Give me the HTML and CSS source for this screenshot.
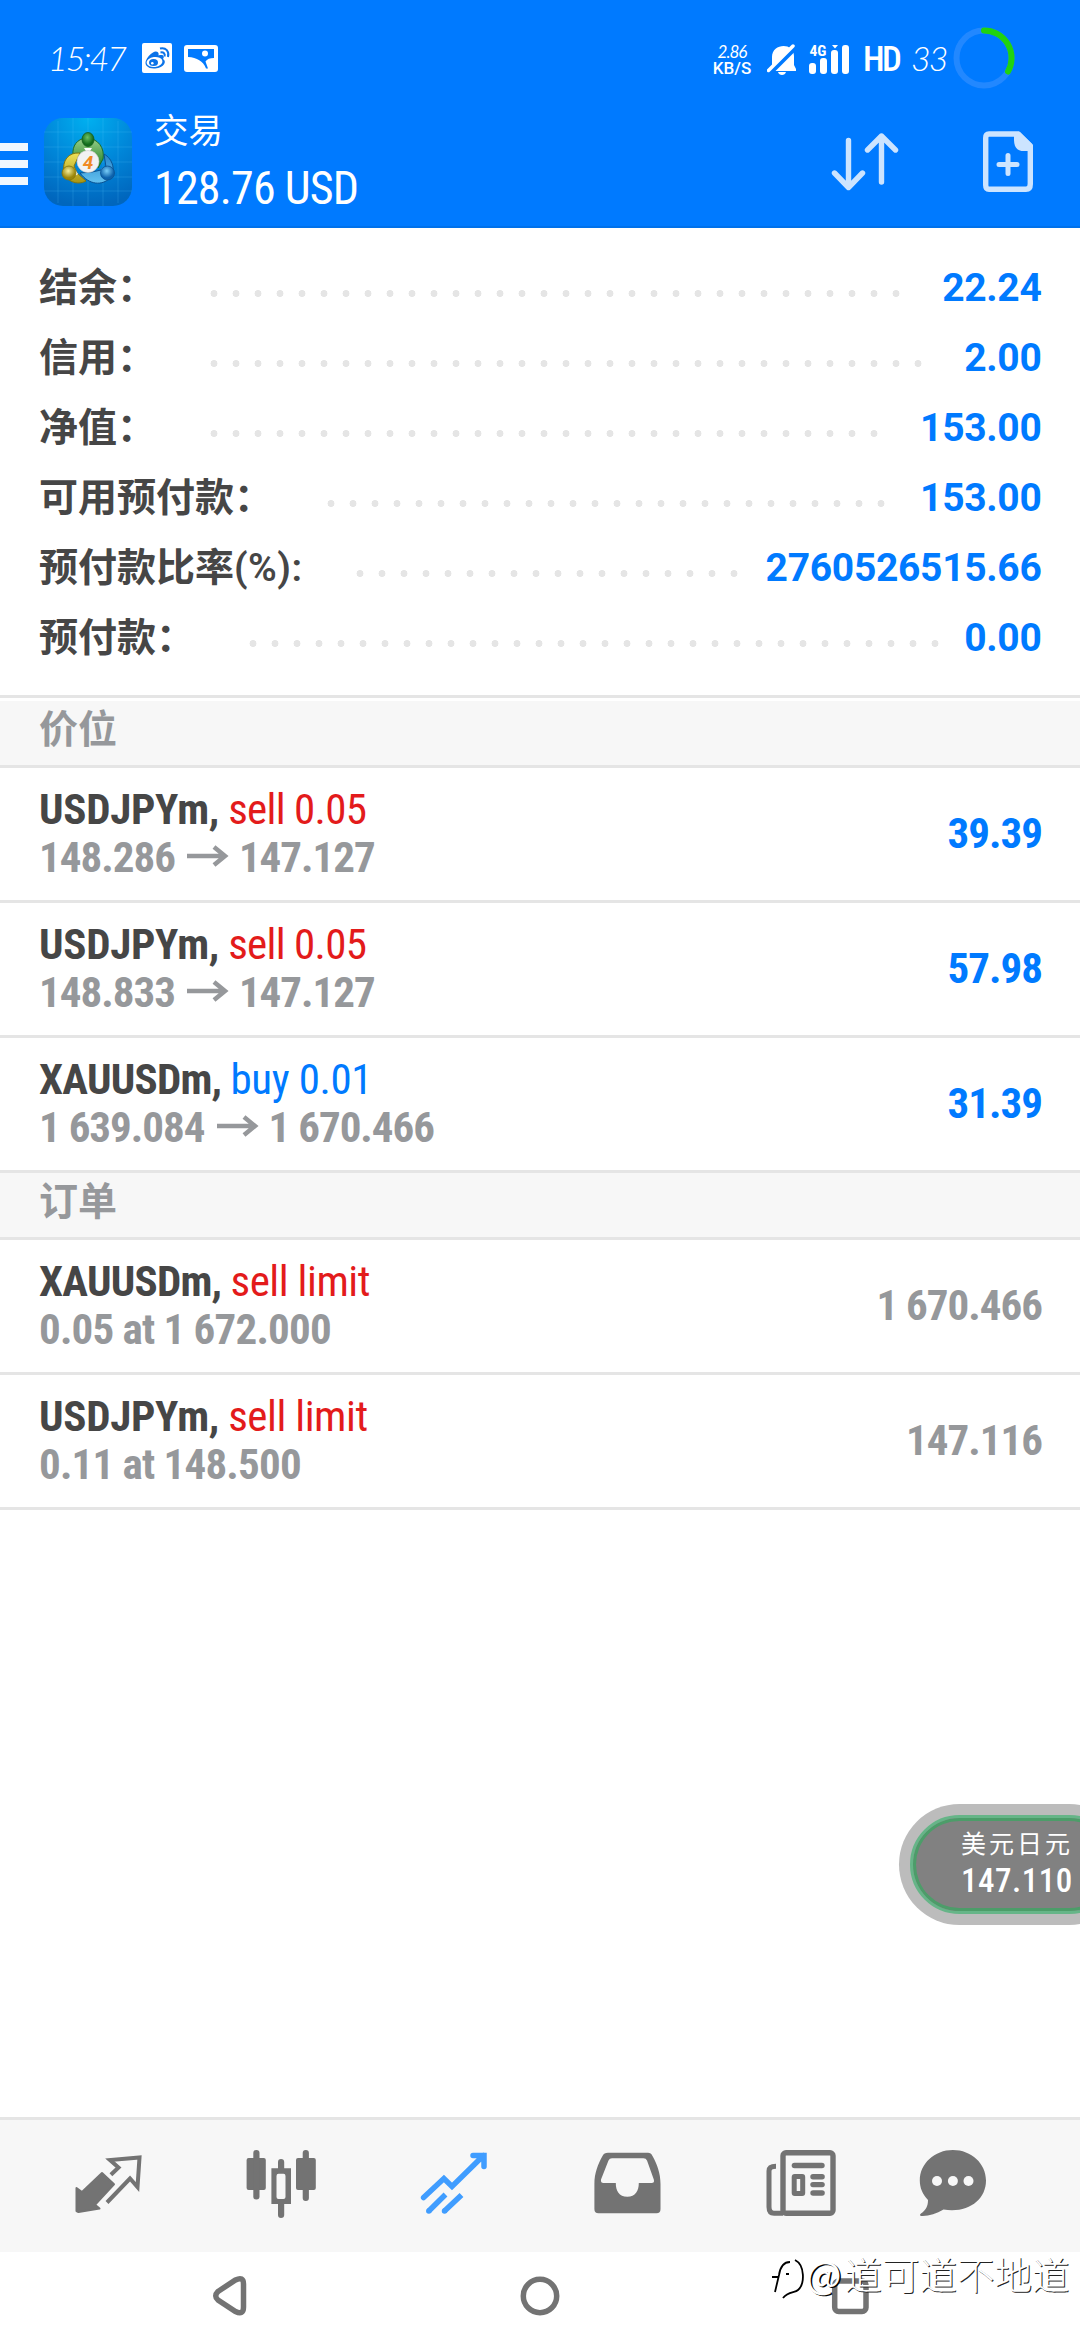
FILE: index.html
```html
<!DOCTYPE html>
<html lang="zh-CN">
<head>
<meta charset="utf-8">
<title>交易</title>
<link rel="stylesheet" href="styles.css">
</head>
<body>
<header class="header">
  <div class="status">
    <span class="clock">15:47</span>
    <svg class="st-weibo" width="30" height="30" viewBox="0 0 30 30">
      <rect width="30" height="30" rx="2" fill="#fff"/>
      <path d="M11 9.500C14 7.500 17.500 9 16.500 12.500C21 11 23 13 21 16C25 18 22.500 25 13 25.500C6 26 2 22 4 17.500C5 14.500 8 11 11 9.500Z" fill="#0b73e8"/>
      <ellipse cx="12.500" cy="19" rx="8" ry="5" fill="#fff" transform="rotate(-8 12.500 19)"/>
      <ellipse cx="11.500" cy="19.500" rx="4.500" ry="3.600" fill="#0b73e8"/>
      <circle cx="10.300" cy="20.300" r="1.300" fill="#fff"/>
      <path d="M18 5.500C24 4 27.500 8.500 26 14M18.500 9.500C21.500 8.800 23.500 10.800 22.500 13.500" fill="none" stroke="#0b73e8" stroke-width="2"/>
    </svg>
    <svg class="st-photo" width="34" height="27" viewBox="0 0 34 27">
      <rect width="34" height="27" rx="3" fill="#fff"/>
      <path d="M4 4H30V13C26 13 23 14 21.500 16.500L24 23.500H22C19 16 13 12.500 4 12Z" fill="#007aff"/>
      <circle cx="21" cy="8.500" r="3" fill="#fff"/>
    </svg>
    <span class="spacer"></span>
    <span class="speed"><span class="speed-num">2.86</span><span class="speed-unit">KB/S</span></span>
    <svg class="st-bell" width="30" height="32" viewBox="766 44 30 32">
      <path d="M771 69V57C771 43 793 42 793 56V65L795 69V71H768Z" fill="#fff"/>
      <path d="M777 72H785C784 76 778 76 777 72Z" fill="#fff"/>
      <path d="M768 74L795 47" stroke="#007aff" stroke-width="5"/>
      <path d="M767.500 70.500L792 46" stroke="#fff" stroke-width="3.500" stroke-linecap="round"/>
    </svg>
    <svg class="st-signal" width="40" height="36" viewBox="808 40 40 36">
      <text x="808.500" y="56" class="net-label" textLength="17" lengthAdjust="spacingAndGlyphs">4G</text>
      <g fill="#fff"><rect x="808" y="63" width="7" height="11" rx="3"/><rect x="819" y="58" width="7" height="16" rx="3"/><rect x="830" y="50" width="7" height="24" rx="3"/><rect x="841" y="45" width="7" height="29" rx="3"/><path d="M831 45H837L834 48.500Z"/></g>
    </svg>
    <span class="hd">HD</span>
    <span class="battery">33</span>
    <svg width="62" height="62" viewBox="0 0 62 62" fill="none" stroke-width="6">
      <circle cx="31" cy="31" r="27.500" stroke="#2288ff"/>
      <path d="M31 3.500A27.500 27.500 0 0 1 55 44.500" stroke="#20d30f" stroke-linecap="round"/>
    </svg>
  </div>
  <div class="appbar">
    <div class="menu"><i></i><i></i><i></i></div>
    <svg class="logo" width="88" height="88" viewBox="0 0 88 88">
      <defs>
        <radialGradient id="bg" cx=".5" cy="0" r="1"><stop offset="0" stop-color="#00b0f0"/><stop offset=".55" stop-color="#0085d8"/><stop offset="1" stop-color="#0066bd"/></radialGradient>
        <linearGradient id="gr" x1="0" y1="0" x2="0" y2="1"><stop offset="0" stop-color="#9ad08a"/><stop offset="1" stop-color="#1d7f25"/></linearGradient>
        <linearGradient id="ye" x1="0" y1="0" x2="0" y2="1"><stop offset="0" stop-color="#eee25a"/><stop offset="1" stop-color="#a89412"/></linearGradient>
        <linearGradient id="bl" x1="0" y1="0" x2="0" y2="1"><stop offset="0" stop-color="#2584cc"/><stop offset="1" stop-color="#64c2f0"/></linearGradient>
        <radialGradient id="gb" cx=".45" cy=".35"><stop offset="0" stop-color="#6cc065"/><stop offset="1" stop-color="#136c1d"/></radialGradient>
        <radialGradient id="yb" cx=".45" cy=".35"><stop offset="0" stop-color="#f5ef9b"/><stop offset="1" stop-color="#9b860a"/></radialGradient>
        <radialGradient id="bb" cx=".45" cy=".35"><stop offset="0" stop-color="#79cdf8"/><stop offset="1" stop-color="#0d62ac"/></radialGradient>
      </defs>
      <rect width="88" height="88" rx="19" fill="url(#bg)"/>
      <path d="M14 3V85M29 0V88M44 0V88M59 0V88M74 3V85M0 14H88M0 29H88M0 44H88M0 59H88M0 73H88" stroke="#5fc8ff" stroke-opacity=".2" fill="none"/>
      <path d="M29 37C28 28 33 21 42 20C54 20 61 30 59 41L54 50L50 36L44 32L36 37Z" fill="url(#gr)" stroke="#1c6d26"/>
      <path d="M60 36C69 41 72 53 66 60C58 68 45 67 36 55L48 54L57 52L62 49Z" fill="url(#bl)" stroke="#0b5292"/>
      <path d="M36 35C24 34 18 43 20 54C22 63 33 68 42 63L33 55L30 48Z" fill="url(#ye)" stroke="#85760c"/>
      <path d="M40 30H48L46 33H42ZM30 50L34 56L31 58ZM57 51L62 50L60 57Z" fill="#fff"/>
      <ellipse cx="44" cy="21.500" rx="6" ry="7" fill="url(#gb)" stroke="#165d1d" stroke-width=".8"/>
      <circle cx="25" cy="55" r="7" fill="url(#yb)" stroke="#83730c" stroke-width=".8"/>
      <circle cx="63.500" cy="55" r="7" fill="url(#bb)" stroke="#0b5292" stroke-width=".8"/>
      <circle cx="44" cy="43.500" r="11" fill="#f2f2f2" stroke="#c7c7c7" stroke-width=".6"/>
      <text x="44" y="50.500" class="logo-num" text-anchor="middle">4</text>
    </svg>
    <div class="titles">
      <div class="title">交易</div>
      <div class="balance">128.76 USD</div>
    </div>
    <span class="spacer"></span>
    <svg class="sort" width="68" height="60" viewBox="831 131 68 60" fill="none" stroke="#cce4ff" stroke-width="5.400" stroke-linecap="round" stroke-linejoin="round">
      <path d="M848.500 140.500V187M834.500 173L848.500 187.500L862.500 173M881.500 182V136M867.500 150L881.500 136L895.500 150"/>
    </svg>
    <svg class="newdoc" width="50" height="61" viewBox="983 131 50 61">
      <path d="M989 134H1018L1030.300 146V184Q1030.300 189.300 1026 189.300H989Q985.700 189.300 985.700 185V138Q985.700 134 989 134Z" fill="none" stroke="#cce4ff" stroke-width="5.400"/>
      <path d="M1014 132H1020L1032 144V151H1024Q1014 151 1014 140Z" fill="#cce4ff"/>
      <path d="M999 164.500H1017M1008 155.500V173.500" stroke="#cce4ff" stroke-width="5" stroke-linecap="round"/>
    </svg>
  </div>
</header>

<main>
  <section class="account">
    <div class="acc-row"><span class="label">结余：</span><i class="dots" style="--n:32"></i><span class="amount">22.24</span></div>
    <div class="acc-row"><span class="label">信用：</span><i class="dots" style="--n:33"></i><span class="amount">2.00</span></div>
    <div class="acc-row"><span class="label">净值：</span><i class="dots" style="--n:31"></i><span class="amount">153.00</span></div>
    <div class="acc-row"><span class="label">可用预付款：</span><i class="dots" style="--n:26"></i><span class="amount">153.00</span></div>
    <div class="acc-row"><span class="label">预付款比率<span class="latin">(%):</span></span><i class="dots" style="--n:18"></i><span class="amount">2760526515.66</span></div>
    <div class="acc-row"><span class="label">预付款：</span><i class="dots" style="--n:32"></i><span class="amount">0.00</span></div>
  </section>

  <h2 class="group first">价位</h2>
  <div class="row">
    <div><div class="line1"><b>USDJPYm,</b> <span class="sell">sell 0.05</span></div><div class="line2">148.286<svg class="arrow" viewBox="0 0 64 30"><path d="M12 15H50M39 6L50 15L39 24"/></svg>147.127</div></div>
    <div class="value profit">39.39</div>
  </div>
  <div class="row">
    <div><div class="line1"><b>USDJPYm,</b> <span class="sell">sell 0.05</span></div><div class="line2">148.833<svg class="arrow" viewBox="0 0 64 30"><path d="M12 15H50M39 6L50 15L39 24"/></svg>147.127</div></div>
    <div class="value profit">57.98</div>
  </div>
  <div class="row">
    <div><div class="line1"><b class="xau">XAUUSDm,</b> <span class="buy">buy 0.01</span></div><div class="line2">1 639.084<svg class="arrow" viewBox="0 0 64 30"><path d="M12 15H50M39 6L50 15L39 24"/></svg>1 670.466</div></div>
    <div class="value profit">31.39</div>
  </div>
  <h2 class="group">订单</h2>
  <div class="row">
    <div><div class="line1"><b class="xau">XAUUSDm,</b> <span class="sell pending">sell limit</span></div><div class="line2 order">0.05 at 1 672.000</div></div>
    <div class="value">1 670.466</div>
  </div>
  <div class="row">
    <div><div class="line1"><b>USDJPYm,</b> <span class="sell pending">sell limit</span></div><div class="line2 order">0.11 at 148.500</div></div>
    <div class="value">147.116</div>
  </div>
</main>

<nav class="tabs">
  <svg width="173" height="132" viewBox="23 0 173 132">
    <path d="M102 53L114 64.300L95 84.700L99.500 88.500L78.500 92L76.500 91V68L82 72Z" fill="#737373" stroke="#737373" stroke-width="2" stroke-linejoin="round"/>
    <path d="M110.900 54.700L118.500 47.500L110 40L139.500 37.500L137.500 67L130 58.500L107 82.500" fill="none" stroke="#737373" stroke-width="4"/>
  </svg>
  <svg width="173" height="132" viewBox="196 0 173 132" fill="#737373">
    <rect x="246.600" y="38" width="19.200" height="32" rx="2"/><rect x="253.300" y="30" width="6.200" height="49.500" rx="3"/>
    <path fill-rule="evenodd" d="M271.400 48.300H291V84H271.400ZM278.500 53.700Q276.500 53.700 276.500 56V77Q276.500 79 278.500 79H283.500Q285.500 79 285.500 77V56Q285.500 53.700 283.500 53.700Z"/>
    <path d="M278 51V42Q278 39 281 39Q284.200 39 284.200 42V51ZM278 83V95Q278 98 281 98Q284.200 98 284.200 95V83Z"/>
    <rect x="296" y="38" width="19.800" height="32" rx="2"/><rect x="302.700" y="30" width="6.200" height="51" rx="3"/>
  </svg>
  <svg width="173" height="132" viewBox="369 0 173 132" fill="none" stroke="#409dff" stroke-width="5.500">
    <path d="M423.600 77.500L443.900 58.500L452 66.500L483.500 35.500M473 35.500H484V46.500" stroke-linecap="round"/>
    <path d="M428.800 91L445.500 74.500M444.500 91L461.500 75"/>
    <path d="M428.800 91h.1M444.500 91h.1" stroke-linecap="round"/>
  </svg>
  <svg width="173" height="132" viewBox="542 0 173 132">
    <path fill="#737373" fill-rule="evenodd" d="M608 32.700H648Q651 32.700 652.500 36C657 44 660.500 53 660.500 64V89Q660.500 93.300 656.500 93.300H598.500Q594.400 93.300 594.400 89V64C594.400 53 598 44 602.500 36Q604 32.700 608 32.700ZM612 38.300Q609.500 38.300 608.500 40.500L601 59.500Q600.500 63 603.500 63H615.800C615.800 71 619 76.700 627.300 76.700C635.500 76.700 638.800 71 638.800 63H651.500Q654.800 63 653.800 59.500L647 40.500Q646 38.300 643.500 38.300Z"/>
  </svg>
  <svg width="173" height="132" viewBox="715 0 173 132">
    <rect x="783" y="32.700" width="50" height="60.500" rx="3" fill="none" stroke="#737373" stroke-width="5.400"/>
    <path d="M776 46.300Q769 46.300 769 51V87Q769 93.200 774 93.200H783" fill="none" stroke="#737373" stroke-width="5"/>
    <g fill="#737373"><rect x="791.700" y="42.700" width="33" height="5.600" rx="2.800"/><rect x="810.300" y="54" width="14.500" height="5.400" rx="2.700"/><rect x="810.300" y="62" width="14.500" height="5.200" rx="2.600"/><rect x="810.300" y="70.200" width="14.500" height="5.600" rx="2.800"/></g>
    <rect x="794.200" y="56.500" width="8.500" height="17" rx=".5" fill="none" stroke="#737373" stroke-width="5"/>
  </svg>
  <svg width="173" height="132" viewBox="888 0 173 132">
    <path d="M952.900 30C971.500 30 986 43.500 986 60.500C986 80 968 93.500 943.500 89.500C936 94 928 96.500 921 96Q919 95 921 93.500C926 90 928 86 928 80C922.500 74 919.800 68 919.800 60.500C919.800 43.500 934.500 30 952.900 30Z" fill="#737373"/>
    <g fill="#f7f7f7"><circle cx="937" cy="61" r="5"/><circle cx="952.900" cy="61" r="5"/><circle cx="968.500" cy="61" r="5"/></g>
  </svg>
</nav>

<footer class="sysnav">
  <svg width="40" height="44" viewBox="210 2274 40 44"><path d="M218 2291.500L235.500 2280Q243.500 2276 243.500 2284V2307Q243.500 2315.500 235.500 2311.500L218 2300Q213.500 2296 218 2291.500Z"/></svg>
  <svg width="40" height="44" viewBox="520 2274 40 44"><circle cx="540" cy="2296" r="16.700"/></svg>
  <svg width="40" height="44" viewBox="830 2274 40 44"><rect x="834.700" y="2281" width="31.300" height="30.500" rx="4"/></svg>
</footer>

<div class="watermark">
  <svg width="36" height="50" viewBox="0 0 36 50" fill="none" stroke="#000" stroke-width="1.800"><path d="M2 23H8M5 38L9 21Q11 8 20 8M16 20H19M25 6C35 11 35 30 28 36C25 39 18 37 13 44"/></svg>
  <span><span class="at">@</span>道可道不地道</span>
</div>

<div class="float">
  <div class="float-in">
    <span class="float-name">美元日元</span>
    <span class="float-price">147.110</span>
  </div>
</div>
</body>
</html>
```
FILE: styles.css
```css
* { box-sizing: border-box; }
body {
  margin: 0;
  width: 1080px;
  height: 2340px;
  display: flex;
  flex-direction: column;
  position: relative;
  overflow: hidden;
  background: #fff;
  font-family: "Roboto Condensed", "Noto Sans CJK SC", sans-serif;
}
svg { display: block; flex: none; }
.spacer { flex: 1; }

/* header */
.header { height: 228px; background: #007aff; border-bottom: 2px solid #0071ea; color: #fff; }
.status { height: 116px; display: flex; align-items: center; padding: 0 65px 0 48px; }
.clock { width: 94px; font: italic 300 34px/40px Lato, sans-serif; letter-spacing: -2px; white-space: nowrap; }
.st-photo { margin-left: 12px; }
.speed { width: 44px; margin-right: 13px; display: flex; flex-direction: column; align-items: center; padding-top: 4px; }
.speed-num { font: italic 400 17px/16px Lato, sans-serif; letter-spacing: -1px; }
.speed-unit { font: 500 17px/17px Roboto, sans-serif; }
.st-bell { margin: 4px 12px 0 0; }
.st-signal { margin: 0 14px 0 0; }
.net-label { font: 700 15px "Roboto Condensed", sans-serif; fill: #fff; }
.hd { width: 48px; font: 500 35px/40px "Roboto Condensed", sans-serif; letter-spacing: -2.500px; padding-top: 4px; }
.battery { width: 42px; font: italic 300 34px/40px Lato, sans-serif; letter-spacing: -2px; }

.appbar { display: flex; height: 110px; align-items: flex-start; padding-right: 47px; }
.menu { width: 28px; margin: 27px 16px 0 0; display: flex; flex-direction: column; gap: 9.500px; }
.menu i { height: 7.500px; background: #f0f7ff; }
.logo { margin-top: 2px; }
.logo-num { font: italic 700 19px Roboto, sans-serif; fill: #f08a24; }
.titles { margin-left: 22px; }
.title { font: 400 34.500px/40px "Noto Sans CJK SC", sans-serif; margin-top: -8px; }
.balance { font-size: 46px; line-height: 54px; margin-top: 13px; letter-spacing: -.8px; white-space: nowrap; }
.sort { margin: 15px 84px 0 0; }
.newdoc { margin-top: 15px; }

/* account summary */
.account { padding: 21px 38.500px 26px 39px; }
.acc-row { display: flex; align-items: baseline; height: 70px; font-size: 39px; }
.label { font-family: "Noto Sans CJK SC", sans-serif; font-weight: 700; line-height: 70px; color: #464646; white-space: nowrap; }
.latin { font-family: Roboto, sans-serif; font-weight: 600; letter-spacing: .5px; }
.dots {
  flex: none;
  width: calc(var(--n) * 22px);
  height: 11px;
  margin-left: 46.500px;
  background: radial-gradient(circle at center, #e5e5e5 3.200px, transparent 3.700px) 0 0 / 22px 7px repeat-x;
}
.amount { margin-left: auto; font-family: Roboto, sans-serif; font-weight: 700; letter-spacing: -.3px; color: #007aff; }

/* lists */
.group {
  margin: 0;
  height: 67px;
  padding-left: 39px;
  border-bottom: 3px solid #e5e5e5;
  background: #f7f7f7;
  font: 700 39px/50px "Noto Sans CJK SC", sans-serif;
  color: #96989b;
}
.group.first { height: 73px; border-top: 3px solid #e5e5e5; padding-top: 3px; background: linear-gradient(#fff 3px, #f7f7f7 3px); }
.row {
  display: flex;
  justify-content: space-between;
  align-items: center;
  height: 135px;
  padding: 0 38px 0 39px;
  border-bottom: 3px solid #e5e5e5;
  font-size: 43px;
  line-height: 48px;
}
.row > div:first-child { padding-bottom: 2px; }
.line1 { color: #464646; letter-spacing: -.8px; white-space: pre; }
.line1 b { letter-spacing: -.3px; }
.line1 .xau { letter-spacing: -.75px; }
.sell { color: #e31b1b; letter-spacing: -.7px; }
.sell.pending { letter-spacing: -.45px; }
.buy { color: #007aff; letter-spacing: -.4px; }
.line2, .value { color: #96989b; font-weight: 700; letter-spacing: -1px; white-space: nowrap; }
.line2.order { letter-spacing: -.8px; }
.value { padding-bottom: 2px; }
.value.profit { color: #007aff; }
.arrow { display: inline-block; width: 64px; height: 30px; vertical-align: 1px; fill: none; stroke: #96989b; stroke-width: 4.500; }

/* bottom bars */
.tabs { margin-top: auto; height: 135px; flex: none; border-top: 3px solid #e5e5e5; background: #f7f7f7; display: flex; padding-left: 23px; }
.sysnav { height: 88px; flex: none; display: flex; justify-content: space-between; align-items: center; padding: 0 210px; }
.sysnav svg { fill: none; stroke: #737373; stroke-width: 5.500; }

/* overlays */
.watermark { position: absolute; left: 770px; top: 2254px; display: flex; align-items: flex-start; }
.watermark > span {
  margin-top: -3px;
  font: 300 37.500px/44px "Noto Sans CJK SC", sans-serif;
  color: #fff;
  white-space: nowrap;
  text-shadow: 1px 1px 0 #222;
}
.watermark .at { font-weight: 400; letter-spacing: 3px; text-shadow: 1.500px 1px 0 #000; }
.float { position: absolute; left: 899px; top: 1804px; width: 231px; height: 121px; border-radius: 61px; background: #bcbcbc; padding: 11px; }
.float-in {
  height: 99px;
  border-radius: 50px;
  border: 3px solid #66b588;
  background: #818181;
  box-shadow: inset 0 0 0 3px #4c9d69;
  padding: 8px 0 0 48px;
  color: #fff;
  display: flex;
  flex-direction: column;
}
.float-name { font: 400 25px/32px "Noto Sans CJK SC", sans-serif; letter-spacing: 3px; white-space: nowrap; }
.float-price { font: 500 33px/45px "Roboto Condensed", sans-serif; letter-spacing: .5px; }
```
